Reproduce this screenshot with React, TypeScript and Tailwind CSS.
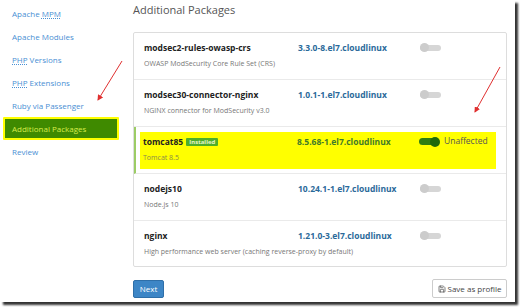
import { Save } from 'lucide-react';

const navItems = [
  { label: 'Apache', abbr: 'MPM' },
  { label: 'Apache Modules' },
  { abbr: 'PHP', label: 'Versions', prefix: true },
  { abbr: 'PHP', label: 'Extensions', prefix: true },
  { label: 'Ruby via Passenger' },
  { label: 'Additional Packages', active: true },
  { label: 'Review' },
];

const packages = [
  { name: 'modsec2-rules-owasp-crs', desc: 'OWASP ModSecurity Core Rule Set (CRS)', version: '3.3.0-8.el7.cloudlinux' },
  { name: 'modsec30-connector-nginx', desc: 'NGINX connector for ModSecurity v3.0', version: '1.0.1-1.el7.cloudlinux' },
  { name: 'tomcat85', desc: 'Tomcat 8.5', version: '8.5.68-1.el7.cloudlinux', installed: true },
  { name: 'nodejs10', desc: 'Node.js 10', version: '10.24.1-1.el7.cloudlinux' },
  { name: 'nginx', desc: 'High performance web server (caching reverse-proxy by default)', version: '1.21.0-3.el7.cloudlinux' },
];

function Toggle({ on }: { on?: boolean }) {
  if (on) {
    return (
      <div className="relative w-[21px] h-[9px] flex items-center">
        <div className="w-[20px] h-[7px] rounded-full bg-[#2f7d12]" />
        <div className="absolute right-0 w-[10px] h-[10px] rounded-full bg-[#1f6a0a]" />
      </div>
    );
  }
  return (
    <div className="relative w-[21px] h-[9px] flex items-center">
      <div className="w-[21px] h-[6px] rounded-full bg-[#d6d6d6]" />
      <div className="absolute left-0 w-[9px] h-[9px] rounded-full bg-[#cccccc]" />
    </div>
  );
}

function PackageRow({ pkg, last }: { pkg: (typeof packages)[number]; last: boolean }) {
  const content = (
    <div className="flex">
      <div className="w-[154px] shrink-0">
        <div className="flex items-center gap-[3px] leading-[11px] text-[8.5px] font-bold text-[#222]">
          {pkg.name}
          {pkg.installed && (
            <span className="px-[3px] leading-[8px] text-[6px] font-bold text-[#e8f5c8] bg-[#4fae2a] rounded-[1px]">
              Installed
            </span>
          )}
        </div>
        <div
          className={`mt-[5px] leading-[11px] text-[7px] whitespace-nowrap ${
            pkg.installed ? 'text-[#8a8a4a]' : 'text-[#777]'
          }`}
        >
          {pkg.desc}
        </div>
      </div>
      <div
        className={`w-[122px] shrink-0 leading-[11px] text-[8.5px] font-bold ${
          pkg.installed ? 'text-[#3f7a2a]' : 'text-[#2b6a9a]'
        }`}
      >
        {pkg.version}
      </div>
      <div className="flex items-center gap-[4px] h-[9px] mt-[1px]">
        <Toggle on={pkg.installed} />
        {pkg.installed && <span className="text-[8.5px] text-[#555]">Unaffected</span>}
      </div>
    </div>
  );

  if (pkg.installed) {
    return (
      <div className="h-[47px] border-l-2 border-[#9ccc65] border-b border-b-[#eaeaea] pl-[4px] pr-[10px] pt-[5px] pb-[4px]">
        <div className="h-full bg-[#ffff00] pl-[3px] pt-[4px]">{content}</div>
      </div>
    );
  }

  return (
    <div className={`pl-[10px] pt-[9px] ${last ? 'h-[45px]' : 'h-[47px] border-b border-[#eaeaea]'}`}>{content}</div>
  );
}

export default function App() {
  return (
    <div className="w-[520px] h-[307px] bg-white" style={{ fontFamily: '"Open Sans", "Noto Sans", sans-serif' }}>
      <div className="relative w-[515px] h-[302px] bg-white shadow-[3px_3px_2px_rgba(0,0,0,0.8)] flex overflow-hidden">
        {/* Sidebar */}
        <div className="w-[133px] shrink-0 pt-[2px]">
          {navItems.map((item) =>
            item.active ? (
              <div
                key={item.label}
                className="ml-[3px] w-[116px] h-[23px] border-2 border-[#ffff00] bg-[#3f8a00] rounded-[1px] flex items-center pl-[7px] text-[8px] text-[#d8ec4a]"
              >
                {item.label}
              </div>
            ) : (
              <div key={item.label} className="h-[23px] flex items-center pl-[12px] text-[8px] text-[#4a8fd4]">
                {item.prefix ? (
                  <span>
                    <span className="underline decoration-dotted underline-offset-1">{item.abbr}</span> {item.label}
                  </span>
                ) : item.abbr ? (
                  <span>
                    {item.label} <span className="underline decoration-dotted underline-offset-1">{item.abbr}</span>
                  </span>
                ) : (
                  item.label
                )}
              </div>
            )
          )}
        </div>

        {/* Main */}
        <div className="w-[374px] shrink-0">
          <h1 className="mt-[3px] leading-[14px] text-[11px] text-[#555]">Additional Packages</h1>
          <div className="mt-[15px] border border-[#dddddd] rounded-[2px] bg-white">
            {packages.map((pkg, i) => (
              <PackageRow key={pkg.name} pkg={pkg} last={i === packages.length - 1} />
            ))}
          </div>
          <div className="mt-[12px] flex justify-between items-center">
            <button className="h-[18px] w-[31px] bg-[#3d86c6] border border-[#2f6fa8] rounded-[2px] text-[8px] text-white">
              Next
            </button>
            <button className="h-[19px] w-[75px] border border-[#cccccc] rounded-[2px] bg-white flex items-center justify-center gap-[2px] text-[8px] text-[#444]">
              <Save size={8} strokeWidth={2} />
              Save as profile
            </button>
          </div>
        </div>

        {/* Annotation arrows */}
        <svg className="absolute inset-0 pointer-events-none" width="515" height="302">
          <defs>
            <marker id="arrow" markerWidth="6" markerHeight="6" refX="5" refY="3" orient="auto">
              <path d="M0,0 L6,3 L0,6 Z" fill="#e03030" />
            </marker>
          </defs>
          <line x1="122" y1="61" x2="98" y2="100" stroke="#e03030" strokeWidth="1" markerEnd="url(#arrow)" />
          <line x1="500" y1="67" x2="475" y2="112" stroke="#e03030" strokeWidth="1" markerEnd="url(#arrow)" />
        </svg>
      </div>
    </div>
  );
}
